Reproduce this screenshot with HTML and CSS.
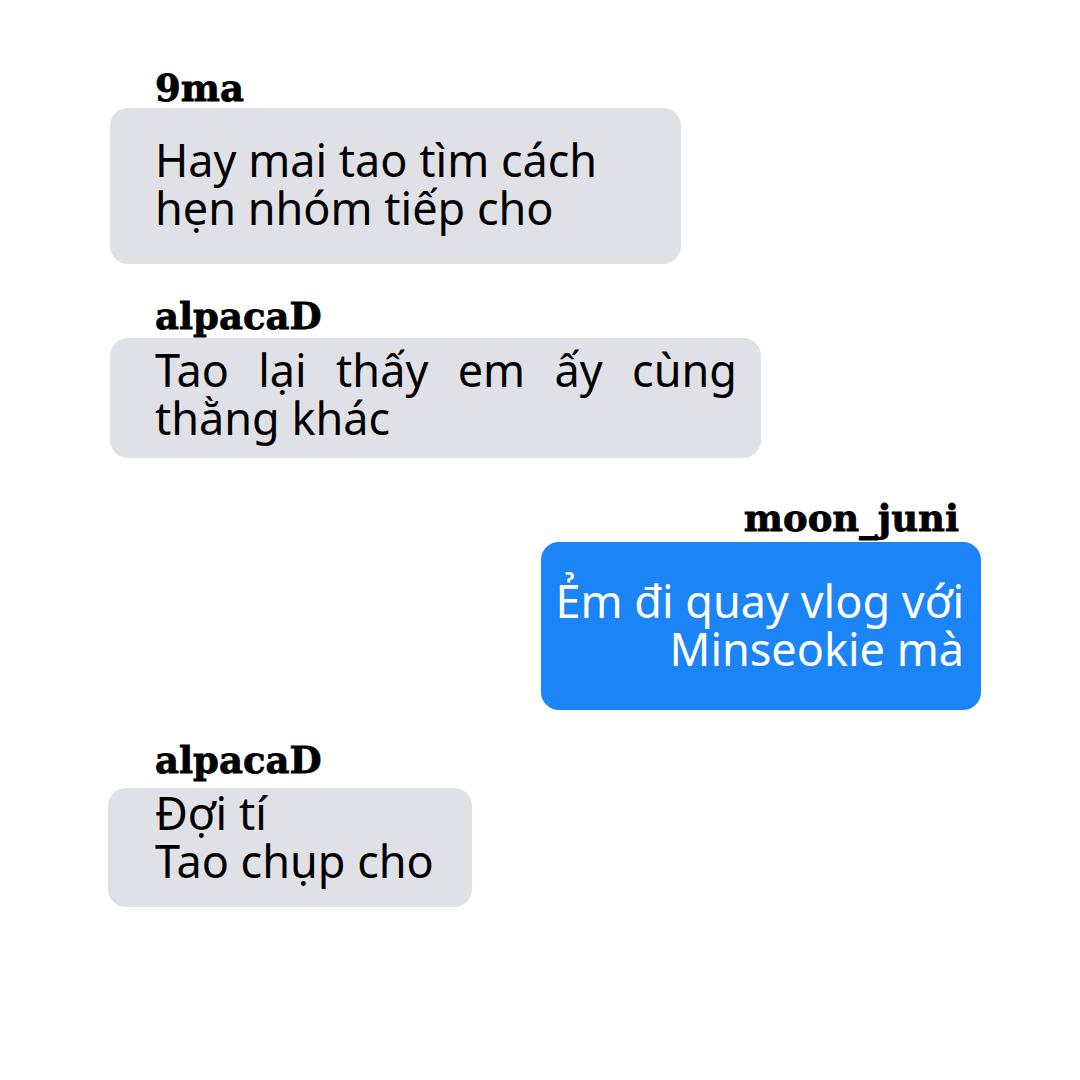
FILE: index.html
```html
<!DOCTYPE html>
<html lang="vi">
<head>
    <meta charset="UTF-8">
    <meta name="viewport" content="width=device-width, initial-scale=1.0">
    <title>Chat</title>
    <link rel="stylesheet" href="styles.css">
</head>
<body>
    <div class="chat">
        <div class="msg msg-1">
            <div class="name">9ma</div>
            <div class="bubble">Hay mai tao tìm cách<br>hẹn nhóm tiếp cho</div>
        </div>

        <div class="msg msg-2">
            <div class="name">alpacaD</div>
            <div class="bubble">
                <span class="justify-line">Tao lại thấy em ấy cùng</span>
                thằng khác
            </div>
        </div>

        <div class="msg msg-3 mine">
            <div class="name">moon_juni</div>
            <div class="bubble">Ẻm đi quay vlog với<br>Minseokie mà</div>
        </div>

        <div class="msg msg-4">
            <div class="name">alpacaD</div>
            <div class="bubble">Đợi tí<br>Tao chụp cho</div>
        </div>
    </div>
</body>
</html>
```

FILE: styles.css
```css
body {
    margin: 0;
    padding: 0;
    background-color: #ffffff;
    color: #000;
    font-family: "Noto Sans", sans-serif;
}
.chat {
    width: 1080px;
    height: 1080px;
    display: flex;
    flex-direction: column;
    box-sizing: border-box;
    padding-top: 68px;
}
.msg {
    display: flex;
    flex-direction: column;
    align-self: flex-start;
    margin-left: 110px;
}
.name {
    font-family: "DejaVu Serif", serif;
    font-weight: 900;
    font-size: 37px;
    line-height: 40px;
    padding-left: 45px;
    -webkit-text-stroke: 0.8px #000;
}
.bubble {
    background-color: #e0e1e6;
    border-radius: 18px;
    font-size: 45px;
    line-height: 48px;
    box-sizing: border-box;
    padding-left: 45px;
}
.justify-line {
    display: block;
    text-align: justify;
    text-align-last: justify;
}

/* per message spacing */
.msg-1 .bubble {
    width: 571px;
    padding-top: 28px;
    padding-bottom: 32px;
}
.msg-2 {
    margin-top: 32px;
}
.msg-2 .name {
    margin-bottom: 2px;
}
.msg-2 .bubble {
    width: 651px;
    padding-top: 8px;
    padding-bottom: 16px;
    padding-right: 24px;
}
.msg-3 {
    margin-top: 40px;
}
.msg-3 .name {
    margin-bottom: 4px;
}
.mine {
    align-self: flex-end;
    margin-left: 0;
    margin-right: 99px;
}
.mine .name {
    padding-left: 0;
    padding-right: 22px;
    text-align: right;
}
.mine .bubble {
    width: 440px;
    background-color: #1b84f7;
    color: #fff;
    text-align: right;
    padding-left: 0;
    padding-right: 17px;
    padding-top: 35px;
    padding-bottom: 37px;
}
.msg-4 {
    margin-top: 30px;
    margin-left: 108px;
}
.msg-4 .name {
    padding-left: 47px;
    margin-bottom: 8px;
}
.msg-4 .bubble {
    width: 364px;
    padding-left: 47px;
    padding-top: 1px;
    padding-bottom: 22px;
}
```
